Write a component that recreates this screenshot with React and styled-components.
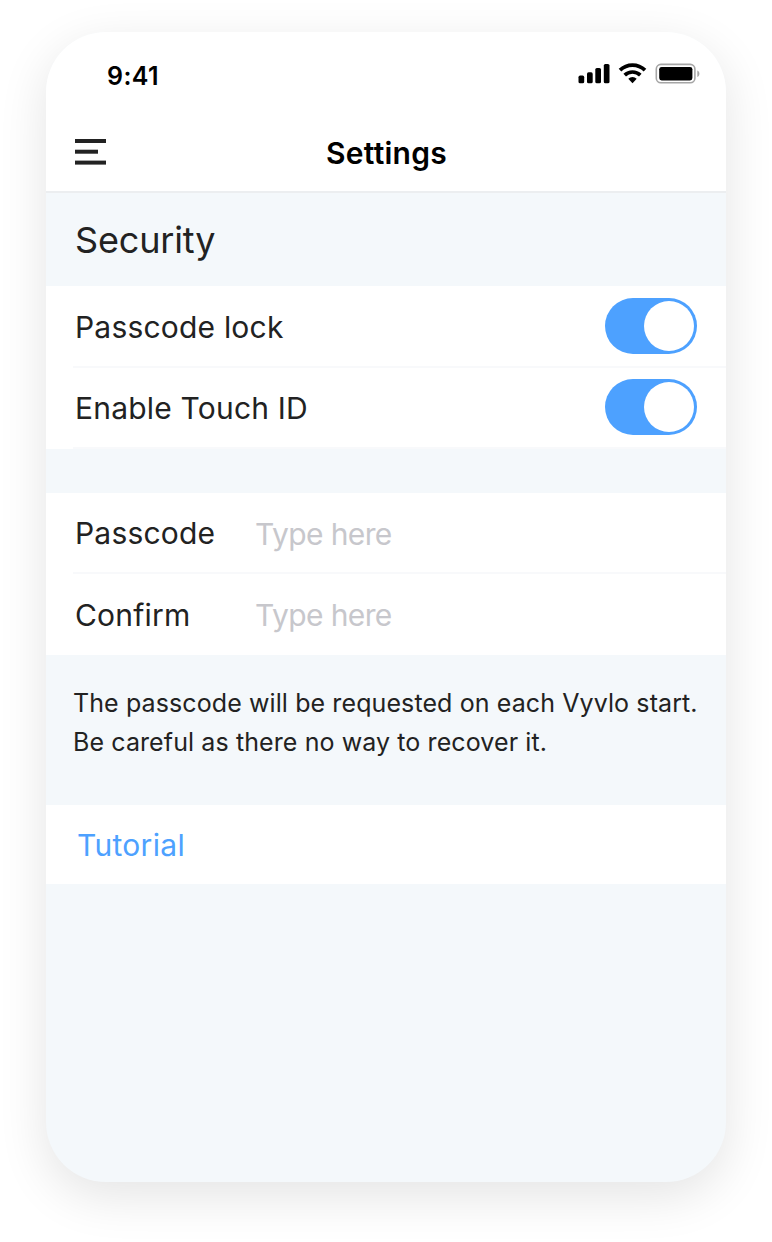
import React, { useState } from "react";
import styled, { createGlobalStyle } from "styled-components";

const GlobalStyle = createGlobalStyle`
  * { box-sizing: border-box; }
  body {
    margin: 0;
    background: #fff;
    font-family: Inter, "Liberation Sans", sans-serif;
    color: #222;
  }
`;

const Page = styled.div`
  height: 1242px;
  padding: 32px 46px 60px;
  overflow: hidden;
`;

const Phone = styled.main`
  width: 680px;
  height: 1150px;
  border-radius: 60px;
  overflow: hidden;
  background: #f4f8fb;
  box-shadow: 0 14px 50px rgba(0, 0, 0, 0.11);
  display: flex;
  flex-direction: column;
`;

const StatusBar = styled.div`
  height: 82px;
  padding: 5px 26px 0 61px;
  display: flex;
  align-items: center;
  justify-content: space-between;
  background: #fff;
`;

const Time = styled.span`
  font-size: 25px;
  line-height: 30px;
  font-weight: 600;
  color: #000;
  letter-spacing: 0.4px;
`;

const StatusIcons = styled.svg`
  display: block;
  width: 124px;
  height: 24px;
  margin-bottom: 4px;
`;

const NavBar = styled.header`
  height: 79px;
  padding: 0 28px 0 29px;
  display: grid;
  grid-template-columns: 31px 1fr 31px;
  align-items: center;
  background: #fff;
  border-bottom: 2px solid #eceef0;
`;

const MenuButton = styled.button`
  padding: 0;
  border: 0;
  background: none;
  height: 26px;
  margin-bottom: 2px;
  svg { display: block; }
`;

const Title = styled.h1`
  margin: 0;
  text-align: center;
  font-size: 30px;
  line-height: 40px;
  font-weight: 600;
  letter-spacing: 0.25px;
  color: #000;
`;

const SectionTitle = styled.h2`
  margin: 0;
  height: 93px;
  padding: 1px 0 0 29px;
  font-size: 36px;
  line-height: 93px;
  font-weight: 400;
  letter-spacing: -0.15px;
`;

const Group = styled.section`
  background: #fff;
  margin-bottom: ${(p) => p.$gap || 0}px;
`;

const Row = styled.div`
  height: ${(p) => p.$height}px;
  margin-left: 27px;
  padding: 0 29px ${(p) => p.$bottom || 0}px 2px;
  display: flex;
  align-items: center;
  border-bottom: ${(p) => (p.$last ? "0" : "2px solid #f8f9fb")};
`;

const Label = styled.label`
  flex: ${(p) => (p.$fixed ? "0 0 179px" : "1")};
  padding-top: ${(p) => (p.$fixed ? 1 : 2)}px;
  font-size: 30px;
  line-height: 40px;
  letter-spacing: 0.2px;
`;

const Field = styled.input`
  flex: 1;
  min-width: 0;
  height: 44px;
  margin: 0 0 ${(p) => (p.$raised ? 2 : 0)}px;
  padding: 2px 0 0 1px;
  border: 0;
  outline: 0;
  background: none;
  font: 400 30px/40px Inter, "Liberation Sans", sans-serif;
  letter-spacing: -0.6px;
  color: #222;
  &::placeholder { color: #c7c7cc; opacity: 1; }
`;

const Track = styled.button`
  width: 92px;
  height: 56px;
  padding: 3px;
  border: 0;
  border-radius: 28px;
  display: flex;
  justify-content: ${(p) => (p.$on ? "flex-end" : "flex-start")};
  background: ${(p) => (p.$on ? "#4da1ff" : "#e2e5e9")};
`;

const Knob = styled.span`
  width: 50px;
  height: 50px;
  border-radius: 50%;
  background: #fff;
`;

const Note = styled.p`
  margin: 0;
  height: 150px;
  padding: 29px 0 0 27px;
  font-size: 25px;
  line-height: 39px;
  letter-spacing: 0.1px;
  white-space: nowrap;
`;

const LinkRow = styled.a`
  display: block;
  height: 79px;
  padding-left: 31px;
  background: #fff;
  font-size: 30px;
  line-height: 81px;
  letter-spacing: 0.3px;
  color: #4da1ff;
`;

function Toggle({ label }) {
  const [on, setOn] = useState(true);
  return (
    <Track type="button" role="switch" aria-label={label} aria-checked={on} $on={on} onClick={() => setOn(!on)}>
      <Knob />
    </Track>
  );
}

export default function App() {
  return (
    <>
      <GlobalStyle />
      <Page>
        <Phone>
          <StatusBar>
            <Time>9:41</Time>
            <StatusIcons viewBox="0 0 124 24">
              <rect x="2.5" y="13.6" width="5.7" height="7.7" rx="1.6" />
              <rect x="11" y="10.3" width="5.7" height="11" rx="1.6" />
              <rect x="19.3" y="6" width="5.7" height="15.3" rx="1.6" />
              <rect x="27.8" y="2" width="5.7" height="19.3" rx="1.6" />
              <g fill="none" stroke="#000" strokeWidth="3.7">
                <path d="M44 8.2a18 18 0 0 1 25 0" />
                <path d="M48.7 13.1a11.3 11.3 0 0 1 15.6 0" />
              </g>
              <path d="M52.3 16.7a6.3 6.3 0 0 1 8.4 0l-4.2 4.5z" />
              <rect x="80.3" y="2.4" width="38.6" height="18.4" rx="4.6" fill="none" stroke="#a6a6a6" strokeWidth="1.6" />
              <rect x="83.2" y="4.9" width="33.2" height="13.5" rx="2.4" />
              <path d="M121.3 8.4c2.8 1.1 2.8 5.5 0 6.6z" fill="#a6a6a6" />
            </StatusIcons>
          </StatusBar>
          <NavBar>
            <MenuButton aria-label="Menu">
              <svg width="31" height="26" viewBox="0 0 31 26" fill="#222">
                <rect width="31" height="4" />
                <rect y="10.7" width="23" height="4" />
                <rect y="21.6" width="31" height="4" />
              </svg>
            </MenuButton>
            <Title>Settings</Title>
          </NavBar>
          <SectionTitle>Security</SectionTitle>
          <Group $gap={44}>
            <Row $height={82}>
              <Label>Passcode lock</Label>
              <Toggle label="Passcode lock" />
            </Row>
            <Row $height={81} $bottom={1}>
              <Label>Enable Touch ID</Label>
              <Toggle label="Enable Touch ID" />
            </Row>
          </Group>
          <Group>
            <Row $height={81}>
              <Label $fixed htmlFor="passcode">Passcode</Label>
              <Field id="passcode" placeholder="Type here" />
            </Row>
            <Row $height={81} $last>
              <Label $fixed htmlFor="confirm">Confirm</Label>
              <Field id="confirm" placeholder="Type here" $raised />
            </Row>
          </Group>
          <Note>
            The passcode will be requested on each Vyvlo start.
            <br />
            Be careful as there no way to recover it.
          </Note>
          <LinkRow>Tutorial</LinkRow>
        </Phone>
      </Page>
    </>
  );
}
